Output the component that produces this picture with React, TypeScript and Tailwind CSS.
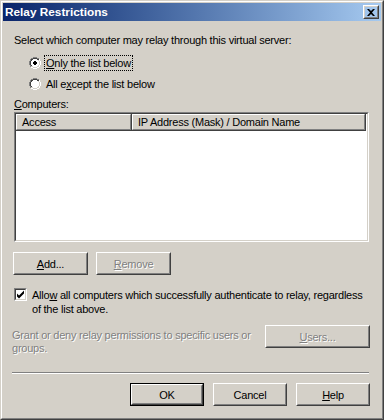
import type { ReactNode } from 'react';

const Raised = ({
  children,
  className = '',
  isDefault = false,
}: {
  children: ReactNode;
  className?: string;
  isDefault?: boolean;
}) => (
  <div className={`${isDefault ? 'border border-black' : ''} ${className}`}>
    <div className="h-full border border-t-white border-l-white border-r-[#404040] border-b-[#404040]">
      <div className="h-full flex items-center justify-center border border-t-[#d4d0c8] border-l-[#d4d0c8] border-r-[#808080] border-b-[#808080]">
        {children}
      </div>
    </div>
  </div>
);

const Radio = ({ checked }: { checked?: boolean }) => (
  <svg width="12" height="12" viewBox="0 0 12 12" className="shrink-0">
    <path d="M4 0h4v1H4zM2 1h2v1H2zM8 1h2v1H8zM1 2h1v2H1zM0 4h1v4H0zM1 8h1v2H1z" fill="#808080" />
    <path d="M10 2h1v2h-1zM11 4h1v4h-1zM10 8h1v2h-1zM8 10h2v1H8zM2 10h2v1H2zM4 11h4v1H4z" fill="#ffffff" />
    <path d="M4 1h4v1H4zM2 2h2v1H2zM8 2h2v1H8zM2 3h1v1H2zM1 4h1v4H1zM2 8h1v1H2z" fill="#404040" />
    <path d="M9 3h1v1H9zM10 4h1v4h-1zM9 8h1v1H9zM8 9h2v1H8zM2 9h2v1H2zM4 10h4v1H4z" fill="#d4d0c8" />
    <path d="M4 2h4v1h1v1h1v4H9v1H8v1H4V9H3V8H2V4h1V3h1z" fill="#ffffff" />
    {checked && <path d="M5 4h2v1h1v2H7v1H5V7H4V5h1z" fill="#000000" />}
  </svg>
);

const Check = () => (
  <div className="w-[13px] h-[13px] shrink-0 border border-t-[#808080] border-l-[#808080] border-r-white border-b-white">
    <div className="w-full h-full bg-white border border-t-[#404040] border-l-[#404040] border-r-[#d4d0c8] border-b-[#d4d0c8]">
      <svg width="9" height="9" viewBox="0 0 9 9">
        <path d="M1 3v3l2 2 5-5V0L3 5z" fill="#000000" transform="translate(0 0.5)" />
      </svg>
    </div>
  </div>
);

const Disabled = ({ children }: { children: ReactNode }) => (
  <span className="text-[#808080] [text-shadow:1px_1px_0_#ffffff]">{children}</span>
);

const App = () => {
  return (
    <div className="w-[384px] h-[420px] font-['Liberation_Sans',Arial,sans-serif] text-[11px] tracking-[-0.23px] leading-[14px] text-black select-none">
      <div className="w-full h-full bg-[#d4d0c8] border border-t-[#d4d0c8] border-l-[#d4d0c8] border-r-[#404040] border-b-[#404040]">
        <div className="w-full h-full border border-t-white border-l-white border-r-[#808080] border-b-[#808080] p-px flex flex-col">
          <div className="h-[18px] flex items-center justify-between pl-[2px] pr-[2px] bg-gradient-to-r from-[#0a246a] to-[#a6caf0]">
            <span className="text-white font-bold text-[11.8px] tracking-normal">Relay Restrictions</span>
            <Raised className="w-[16px] h-[14px]">
              <svg width="8" height="7" viewBox="0 0 8 7">
                <path d="M0 0h2l2 2 2-2h2L5 3.5 8 7H6L4 5 2 7H0l3-3.5z" fill="#000000" />
              </svg>
            </Raised>
          </div>

          <div className="flex flex-col px-[11px]">
            <p className="mt-[12px]">Select which computer may relay through this virtual server:</p>

            <div className="mt-[9px] ml-[15px] flex items-center gap-[4px] h-[14px]">
              <Radio checked />
              <span className="outline-1 outline-dotted outline-black outline-offset-0 px-px">
                <span className="underline">O</span>nly the list below
              </span>
            </div>
            <div className="mt-[7px] ml-[15px] flex items-center gap-[5px] h-[14px]">
              <Radio />
              <span>
                All e<span className="underline">x</span>cept the list below
              </span>
            </div>

            <p className="mt-[6px]">
              <span className="underline">C</span>omputers:
            </p>

            <div className="mt-[1px] h-[130px] w-[355px] border border-t-[#808080] border-l-[#808080] border-r-white border-b-white">
              <div className="h-full bg-white border border-t-[#404040] border-l-[#404040] border-r-[#d4d0c8] border-b-[#d4d0c8] flex flex-col">
                <div className="flex h-[17px] pr-[1px]">
                  <div className="w-[116px] h-full border-r border-b border-r-[#404040] border-b-[#404040]">
                    <div className="h-full bg-[#d4d0c8] border border-t-white border-l-white border-r-[#808080] border-b-[#808080] flex items-center pl-[5px]">
                      Access
                    </div>
                  </div>
                  <div className="flex-1 h-full border-r border-b border-r-[#404040] border-b-[#404040]">
                    <div className="h-full bg-[#d4d0c8] border border-t-white border-l-white border-r-[#808080] border-b-[#808080] flex items-center pl-[5px]">
                      IP Address (Mask) / Domain Name
                    </div>
                  </div>
                </div>
              </div>
            </div>

            <div className="mt-[10px] flex gap-[8px] -ml-px">
              <Raised className="w-[75px] h-[23px]">
                <span>
                  <span className="underline">A</span>dd...
                </span>
              </Raised>
              <Raised className="w-[75px] h-[23px]">
                <Disabled>
                  <span className="underline">R</span>emove
                </Disabled>
              </Raised>
            </div>

            <div className="mt-[12px] flex items-start gap-[5px]">
              <div className="pt-px">
                <Check />
              </div>
              <p className="mt-px">
                Allo<span className="underline">w</span> all computers which successfully authenticate to relay, regardless
                of the list above.
              </p>
            </div>

            <div className="mt-[9px] flex items-start justify-between -ml-[2px]">
              <p className="w-[250px] mt-[4px] leading-[13px] text-[#808080] [text-shadow:1px_1px_0_#ffffff]">
                Grant or deny relay permissions to specific users or groups.
              </p>
              <Raised className="w-[105px] h-[23px]">
                <Disabled>
                  <span className="underline">U</span>sers...
                </Disabled>
              </Raised>
            </div>

            <div className="mt-[17px] -ml-[2px] w-[357px] border-t border-b border-t-[#808080] border-b-white" />

            <div className="mt-[9px] flex justify-end gap-[9px]">
              <Raised className="w-[74px] h-[23px]" isDefault>
                OK
              </Raised>
              <Raised className="w-[74px] h-[23px]">Cancel</Raised>
              <Raised className="w-[74px] h-[23px]">
                <span>
                  <span className="underline">H</span>elp
                </span>
              </Raised>
            </div>
          </div>
        </div>
      </div>
    </div>
  );
};

export default App;
